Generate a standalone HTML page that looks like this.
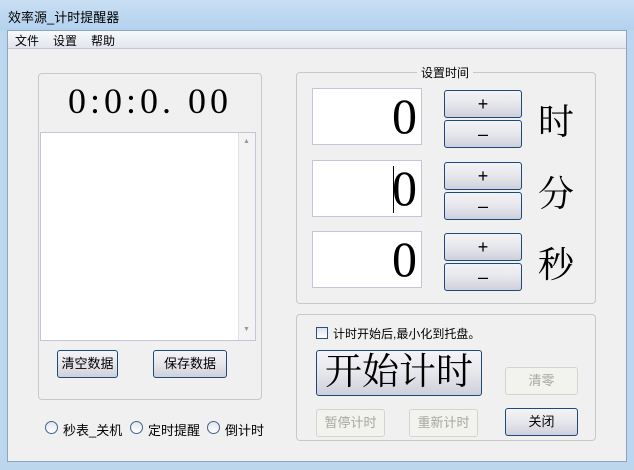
<!DOCTYPE html>
<html><head><meta charset="utf-8"><style>
*{box-sizing:border-box;margin:0;padding:0}
body{width:634px;height:470px;overflow:hidden;background:#bcd6ee;font-family:"Liberation Sans","Noto Sans CJK SC",sans-serif;font-size:12px;color:#000;position:relative}
.abs{position:absolute}
.title{left:0;top:0;width:634px;height:30px;background:linear-gradient(#c9dff3,#b3d1ef);}
.client{left:7px;top:30px;width:620px;height:432px;background:#f0f0f0;border:1px solid #8aa5c2}
.menu{left:8px;top:31px;width:618px;height:18px;background:linear-gradient(#f8f9fc,#e2e5ef);border-bottom:1px solid #c5c9d6}
.grp{border:1px solid #c8c8c8;border-radius:4px}
.btn{border:1px solid #1d4a78;border-radius:3px;background:linear-gradient(#f4f4f7 0%,#e6e6ec 50%,#cfd0dc 100%);text-align:center;font-size:13px}
.dis{border:1px solid #d4d4cc;border-radius:3px;background:#f2f2ee;color:#a8a8a0;text-align:center;font-size:13px}
.tb{background:#fff;border:1px solid #c6c4d8;font-family:"Liberation Serif",serif;font-size:50px;text-align:right;padding-right:4px;line-height:54px}
.lab{font-family:"Liberation Serif","Noto Serif CJK SC",serif;font-size:36px}
.radio{width:13px;height:13px;border-radius:50%;border:1px solid #46618a;background:linear-gradient(#e4e6ee,#fff)}
</style></head><body>
<div class="abs title"></div>
<div class="abs" style="left:8px;top:7px;font-size:13px">效率源_计时提醒器</div>
<div class="abs client"></div>
<div class="abs menu"></div>
<div class="abs" style="left:15px;top:32px;font-size:12px">文件</div>
<div class="abs" style="left:53px;top:32px;font-size:12px">设置</div>
<div class="abs" style="left:91px;top:32px;font-size:12px">帮助</div>

<div class="abs grp" style="left:38px;top:73px;width:224px;height:327px"></div>
<div class="abs" style="left:68px;top:80px;font-family:'Liberation Serif',serif;font-size:36px;letter-spacing:4px;white-space:nowrap">0:0:0. 00</div>
<div class="abs" style="left:40px;top:132px;width:216px;height:209px;background:#fff;border:1px solid #c6c4d8"></div>
<div class="abs" style="left:238px;top:133px;width:17px;height:207px;background:#f3f3f3;border-left:1px solid #e3e3e3"></div>
<div class="abs" style="left:243px;top:138px;font-size:7px;color:#999">▲</div>
<div class="abs" style="left:243px;top:326px;font-size:7px;color:#999">▼</div>
<div class="abs btn" style="left:57px;top:350px;width:61px;height:28px;line-height:26px">清空数据</div>
<div class="abs btn" style="left:153px;top:350px;width:74px;height:28px;line-height:26px">保存数据</div>
<div class="abs radio" style="left:45px;top:421px"></div><div class="abs" style="left:63px;top:420px;font-size:13px">秒表_关机</div>
<div class="abs radio" style="left:130px;top:421px"></div><div class="abs" style="left:148px;top:420px;font-size:13px">定时提醒</div>
<div class="abs radio" style="left:207px;top:421px"></div><div class="abs" style="left:225px;top:420px;font-size:13px">倒计时</div>

<div class="abs grp" style="left:296px;top:72px;width:300px;height:232px"></div>
<div class="abs" style="left:417px;top:64px;background:#f0f0f0;padding:0 4px;font-size:12px">设置时间</div>
<div class="abs tb" style="left:312px;top:88px;width:110px;height:57px">0</div>
<div class="abs tb" style="left:312px;top:160px;width:110px;height:57px">0</div>
<div class="abs" style="left:393px;top:166px;width:1px;height:47px;background:#000"></div>
<div class="abs tb" style="left:312px;top:231px;width:110px;height:57px">0</div>
<div class="abs btn" style="left:444px;top:90px;width:78px;height:28px;font-size:18px;line-height:26px">+</div>
<div class="abs btn" style="left:444px;top:120px;width:78px;height:28px;font-size:18px;line-height:26px">–</div>
<div class="abs btn" style="left:444px;top:162px;width:78px;height:28px;font-size:18px;line-height:26px">+</div>
<div class="abs btn" style="left:444px;top:192px;width:78px;height:28px;font-size:18px;line-height:26px">–</div>
<div class="abs btn" style="left:444px;top:233px;width:78px;height:28px;font-size:18px;line-height:26px">+</div>
<div class="abs btn" style="left:444px;top:263px;width:78px;height:28px;font-size:18px;line-height:26px">–</div>
<div class="abs lab" style="left:538px;top:94px">时</div>
<div class="abs lab" style="left:538px;top:166px">分</div>
<div class="abs lab" style="left:538px;top:237px">秒</div>

<div class="abs grp" style="left:296px;top:314px;width:300px;height:127px"></div>
<div class="abs" style="left:316px;top:327px;width:12px;height:12px;border:1px solid #2d4f78;background:linear-gradient(#e0e2ea,#fff)"></div>
<div class="abs" style="left:333px;top:325px;font-size:12px">计时开始后,最小化到托盘。</div>
<div class="abs btn" style="left:316px;top:350px;width:166px;height:46px;font-family:'Liberation Serif','Noto Serif CJK SC',serif;font-size:37px;line-height:44px;white-space:nowrap">开始计时</div>
<div class="abs dis" style="left:505px;top:367px;width:73px;height:28px;line-height:26px">清零</div>
<div class="abs dis" style="left:316px;top:409px;width:69px;height:28px;line-height:26px">暂停计时</div>
<div class="abs dis" style="left:409px;top:409px;width:69px;height:28px;line-height:26px">重新计时</div>
<div class="abs btn" style="left:505px;top:408px;width:73px;height:28px;line-height:26px">关闭</div>
</body></html>
